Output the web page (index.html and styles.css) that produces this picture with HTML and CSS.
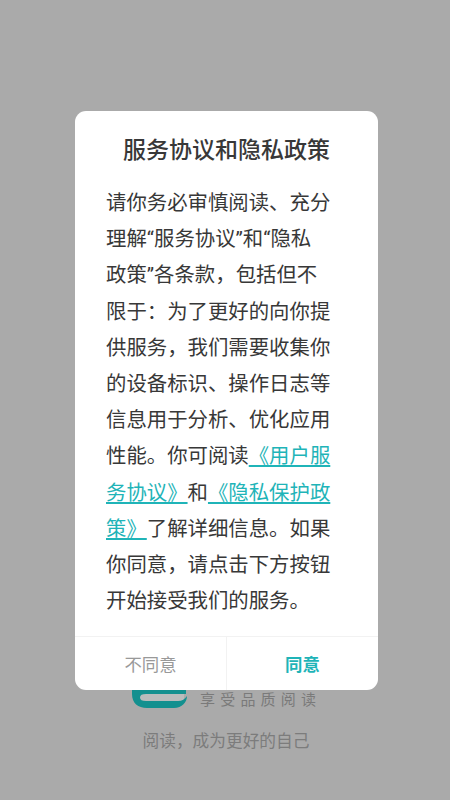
FILE: index.html
```html
<!DOCTYPE html>
<html lang="zh-CN">
<head>
    <meta charset="UTF-8">
    <meta name="viewport" content="width=device-width, initial-scale=1.0">
    <title>服务协议和隐私政策</title>
    <link rel="stylesheet" href="styles.css">
</head>
<body>
    <div class="splash">
        <div class="brand">
            <svg class="logo" width="58" height="50" viewBox="0 0 58 50">
                <path d="M8 36 H52 V43 H8 Z" fill="#b9bcbc"/>
                <path d="M0 0 V36 C0 45 6 50 15 50 H42 C50 50 55 44 55 38 C53 41 50 43 46 43 H14 C10 43 8 42 8 39.5 C8 37 10 36 14 36 H54 V0 Z" fill="#13908f"/>
            </svg>
            <p class="slogan">享受品质阅读</p>
        </div>
        <p class="motto">阅读，成为更好的自己</p>
    </div>

    <div class="dialog">
        <h2 class="dialog-title">服务协议和隐私政策</h2>
        <p class="dialog-text">请你务必审慎阅读、充分理解“服务协议”和“隐私政策”各条款，包括但不限于：为了更好的向你提供服务，我们需要收集你的设备标识、操作日志等信息用于分析、优化应用性能。你可阅读<a href="#" class="link">《用户服务协议》</a>和<a href="#" class="link">《隐私保护政策》</a>了解详细信息。如果你同意，请点击下方按钮开始接受我们的服务。</p>
        <div class="dialog-btns">
            <button class="btn btn-no">不同意</button>
            <button class="btn btn-yes">同意</button>
        </div>
    </div>
</body>
</html>
```

FILE: styles.css
```css
* {
    margin: 0;
    padding: 0;
    box-sizing: border-box;
    font-family: Roboto, "Noto Sans CJK SC", sans-serif;
}
body {
    position: relative;
    width: 450px;
    height: 800px;
    overflow: hidden;
    background-color: #aaaaaa;
}
.splash {
    height: 100%;
    display: flex;
    flex-direction: column;
    justify-content: flex-end;
    align-items: center;
    padding-bottom: 47px;
}
.brand {
    width: 186px;
    display: flex;
    align-items: flex-end;
    gap: 10px;
}
.logo {
    flex-shrink: 0;
}
.slogan {
    font-size: 15px;
    line-height: 16px;
    letter-spacing: 5.2px;
    color: #7a7a7a;
    white-space: nowrap;
}
.motto {
    margin-top: 23px;
    margin-left: 2px;
    font-size: 16.7px;
    line-height: 22px;
    color: #7c7c7c;
}
.dialog {
    position: absolute;
    left: 75px;
    top: 111px;
    width: 303px;
    height: 579px;
    display: flex;
    flex-direction: column;
    background-color: #fff;
    border-radius: 11px;
    overflow: hidden;
}
.dialog-title {
    margin-top: 24px;
    padding-left: 48px;
    font-size: 23px;
    line-height: 32px;
    font-weight: 500;
    color: #383838;
    white-space: nowrap;
}
.dialog-text {
    margin-top: 18px;
    margin-left: 31px;
    width: 225px;
    font-size: 20.4px;
    line-height: 36.2px;
    color: #383838;
}
.link {
    color: #1fb4b8;
    text-decoration: underline;
}
.dialog-btns {
    margin-top: auto;
    height: 54px;
    display: flex;
    border-top: 1px solid #f2f2f2;
}
.btn {
    flex: 1;
    border: none;
    background: transparent;
    font-size: 17.4px;
}
.btn-no {
    color: #999;
    border-right: 1px solid #f2f2f2;
}
.btn-yes {
    color: #1fb4b8;
    font-weight: 700;
}
```
